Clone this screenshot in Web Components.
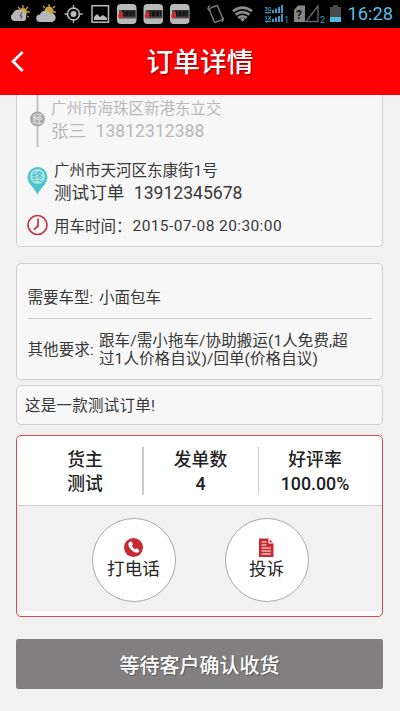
<!DOCTYPE html>
<html lang="zh-CN">
<head>
<meta charset="utf-8">
<title>订单详情</title>
<style>
html,body{margin:0;height:100%;overflow:hidden;background:#f1f1f1}
body{font-family:Roboto,"Noto Sans CJK SC",sans-serif;color:#383838}
</style>
</head>
<body>
<order-page></order-page>
<script>
const define = (name, html) => customElements.define(name, class extends HTMLElement {
  constructor() {
    super();
    const t = document.createElement('template');
    t.innerHTML = html;
    this.attachShadow({mode: 'open'}).append(t.content.cloneNode(true));
  }
});

const thumb = x => `<g transform="translate(${x} 4)"><rect width="19.500" height="20" rx="4" fill="#b9b9b9"/><rect x="2" y="6" width="17" height="8.500" fill="#55504f"/><rect x="5" y="6.500" width="13" height="6" fill="#171717"/><path d="M1 12l2-4h3v6H2z" fill="#c92a2a"/><path d="M8 7v5M12 7v5M16 7v5" stroke="#333"/></g>`;

define('status-bar', `
<style>
:host{display:flex;height:28px;background:#000}
svg{display:block;flex:none}
time{flex:1;font:18.300px/28px Roboto,sans-serif;color:#5fb9e4;text-align:right;padding-right:7px;white-space:nowrap}
</style>
<svg width="345" height="28" viewBox="0 0 345 28">
  <g stroke="#c6a33c" stroke-width="1.300"><path d="M23 5v3M18 7l2 2M28 7l-2 2M30 12h-3M29 17l-2-1"/></g>
  <circle cx="23" cy="12" r="4" fill="#c9a43b"/>
  <path d="M14 21a4 4 0 0 1-1-7.500a5.500 5.500 0 0 1 9-2.500a4.500 4.500 0 0 1 4 6a3 3 0 0 1-2 4z" fill="#b7b7b7"/>
  <path d="M22 12l-2 4h2l-1 3" fill="none" stroke="#555"/>
  <g stroke="#c6a33c" stroke-width="1.300"><path d="M49 4v3M43 6l2 2M55 6l-2 2M56 12h-3"/></g>
  <circle cx="49" cy="11" r="4.500" fill="#c9a43b"/>
  <path d="M40 22a3.700 3.700 0 0 1 0-7.500a5.500 5.500 0 0 1 10-1a4.300 4.300 0 0 1 2.500 8.500z" fill="#b7b7b7"/>
  <circle cx="73.500" cy="14" r="6" fill="none" stroke="#bbb" stroke-width="1.500"/><circle cx="73.500" cy="14" r="3" fill="#bbb"/>
  <path d="M73.500 5v4M73.500 19v4M64.500 14h4M78.500 14h4" stroke="#bbb" stroke-width="1.300"/>
  <rect x="92" y="5.700" width="16.500" height="16.500" fill="none" stroke="#bbb" stroke-width="1.500"/><path d="M94 20v-3l3-3 3 3 3-2 4 3v2z" fill="#bbb"/>
  ${thumb(117)}${thumb(143.500)}${thumb(170)}
  <g fill="none" stroke="#777" stroke-width="1.500"><rect x="211.500" y="6.500" width="9" height="15" rx="1" transform="rotate(-22 216 14)"/><path d="M209.500 5.500l-1.500 3 1 2M222.500 17l1 2-1.500 3"/></g>
  <g fill="none" stroke="#8c8c8c" stroke-width="2.700"><path d="M233 11.200q9.500-7.200 19 0"/><path d="M235.500 14.700q7-5.200 14 0"/><path d="M238.200 17.900q4.300-3.200 8.600 0"/></g><path d="M240 19q2.500-1.800 5 0l-2.500 3z" fill="#8c8c8c"/>
  <g fill="#3f9bc6"><path d="M272 10h2v3h-2zM275 8.500h2V13h-2zM278 7h2v6h-2zM281 5h2v8h-2zM272 19h2v3h-2zM275 17.500h2V22h-2zM278 16h2v6h-2zM281 14h2v8h-2zM265 12h6v1.300h-6zM265 20.700h6V22h-6z"/></g>
  <g fill="#3f9bc6" font-family="Roboto,sans-serif"><text x="264.500" y="10.500" font-size="5.500" font-weight="700">3G</text><text x="264.500" y="19.500" font-size="5.500" font-weight="700">1X</text><text x="284" y="23" font-size="9">1</text><text x="320" y="23" font-size="9">2</text></g>
  <path d="M294 10l4-4.500h7V22h-11z" fill="#858585"/><text x="296" y="19" font-family="Roboto,sans-serif" font-weight="700" font-size="12" fill="#111">?</text>
  <path d="M306 21.500L318 6v15.500z" fill="none" stroke="#686868" stroke-width="1.300"/>
  <path d="M330 7h3V5h5v2h3v15h-11z" fill="#494949"/><path d="M330 17h11v5h-11z" fill="#50b6e2"/>
</svg>
<time>16:28</time>`);

define('title-bar', `
<style>
:host{display:grid;grid-template-columns:40px 1fr 40px;height:67px;background:#fe0000;color:#fff;align-items:center}
svg{display:block}
h1{margin:0;font-size:26.800px;line-height:40px;font-weight:500;text-align:center;text-shadow:1px 1px 1px #7d0000;white-space:nowrap;padding-top:3px}
</style>
<svg width="40" height="67" viewBox="0 0 40 67" fill="none" stroke="#fff" stroke-width="2.800"><path d="M22.700 24L13 33.500l9.700 9.500"/></svg>
<h1><slot></slot></h1>`);

define('info-card', `
<style>
:host{display:block;box-sizing:border-box;border:1.500px solid #cfcfcf;border-radius:5px;background:#f7f7f7;margin:0 17px 0 16px}
</style><slot></slot>`);

define('route-stop', `
<style>
:host{display:grid;grid-template-columns:var(--icon-column) 1fr;white-space:nowrap}
.a{font-size:15.500px;line-height:22px}
.b{font-size:17.600px;line-height:22px}
</style>
<slot name="icon"></slot>
<div><div class="a"><slot name="address"></slot></div><div class="b"><slot name="contact"></slot></div></div>`);

define('label-row', `
<style>
:host{display:grid;grid-template-columns:71.500px 1fr;align-items:center;font-size:15.500px;line-height:18.500px;white-space:nowrap}
</style><span><slot name="label"></slot></span><div><slot></slot></div>`);

define('stat-cell', `
<style>
:host{display:block;flex:1;text-align:center;font-size:17.800px;line-height:24px;font-weight:500;color:#222;white-space:nowrap}
</style><div><slot name="name"></slot></div><div><slot></slot></div>`);

define('round-button', `
<style>
:host{display:flex;flex-direction:column;align-items:center;box-sizing:border-box;width:84px;height:84px;border:1.300px solid #aaa;border-radius:50%;background:#fff;padding-top:19px;font-size:17.600px;line-height:24px;color:#252525;white-space:nowrap}
::slotted(svg){display:block}
</style><slot name="icon"></slot><span><slot></slot></span>`);

define('wide-button', `
<style>
:host{display:flex;align-items:center;justify-content:center;box-sizing:border-box;height:50px;margin:22px 17px 0 16px;border-radius:2px;background:#827f80;color:#fff;font-size:20px;font-weight:500;text-shadow:1px 1px 1px #555;white-space:nowrap}
</style><slot></slot>`);

define('order-page', `
<style>
:host{display:flex;flex-direction:column;width:400px;height:711px;overflow:hidden;background:#f1f1f1}
svg{display:block}
.route{height:152px;border-top:0;border-radius:0 0 5px 5px}
.past{color:#b9b9b9;height:57px;padding-top:3px;box-sizing:border-box;--icon-column:34px}
.past svg{margin-top:-3px}
.end{padding-top:8px;--icon-column:37px}
.end svg{margin-top:4px;margin-bottom:-4px}
.contact{word-spacing:5px}
.when{display:flex;align-items:center;height:28px;margin-top:7px;padding-left:10px;font-size:15.500px;white-space:nowrap}
.when span{margin-left:6px}
.when time{letter-spacing:.4px;margin-left:1px;padding-top:1px}
.needs{height:117px;margin-top:16px;padding:0 10px 0 10.500px}
.needs label-row:first-child{height:55px;padding-top:15px;box-sizing:border-box;border-bottom:1.500px solid #ccc}
.needs label-row:last-child{height:62px}
.needs .wide{letter-spacing:.1px}
.note{height:40px;margin-top:5px;padding-left:8px;font-size:15.500px;line-height:40px;letter-spacing:.25px}
.client{height:182px;margin-top:10px;border-color:#cf4b50;background:#fff;overflow:hidden}
.stats{display:flex;height:69px;border-bottom:1.500px solid #ccc;align-items:center}
.stats i{width:1.500px;height:48px;background:#ccc}
.stats stat-cell{padding-top:2px}
.stats stat-cell:first-child{flex:0 0 125px;box-sizing:border-box;padding-left:11px}
.stats stat-cell:nth-child(3){flex:0 0 114px}
.stats stat-cell:last-child{padding-right:11px}
.actions{display:flex;box-sizing:border-box;height:105px;background:#f1f1f1;padding:2px 0 0 74.500px;gap:49px;align-items:center}
</style>
<status-bar></status-bar>
<title-bar>订单详情</title-bar>
<info-card class="route">
  <route-stop class="past">
    <svg slot="icon" width="34" height="54" viewBox="0 0 34 54"><path d="M20.500 0v52" stroke="#bbb" stroke-width="1.800"/><circle cx="20.500" cy="24" r="7.500" fill="#aaa"/><text x="20.500" y="27.700" text-anchor="middle" font-size="10" fill="#ececec">经</text></svg>
    <span slot="address">广州市海珠区新港东立交</span><span slot="contact" class="contact">张三 13812312388</span>
  </route-stop>
  <route-stop class="end">
    <svg slot="icon" width="37" height="44" viewBox="0 0 37 44"><path d="M20.500 31C18 24 10.500 20 10.500 13a10 10 0 0 1 20 0C30.500 20 23 24 20.500 31z" fill="#4dc3cf"/><circle cx="20.500" cy="12.500" r="7.500" fill="#a8e3e5"/><text x="20.500" y="16.700" text-anchor="middle" font-size="11.500" fill="#42b9c6">终</text></svg>
    <span slot="address">广州市天河区东康街1号</span><span slot="contact" class="contact">测试订单 13912345678</span>
  </route-stop>
  <div class="when"><svg width="21" height="22" viewBox="0 0 21 22" fill="none" stroke="#c2343f" stroke-width="1.700"><circle cx="10.500" cy="11" r="9.500"/><path d="M11 4.500v7.500l-4 3.500"/></svg><span>用车时间：</span><time>2015-07-08 20:30:00</time></div>
</info-card>
<info-card class="needs">
  <label-row><span slot="label">需要车型:</span>小面包车</label-row>
  <label-row class="wide"><span slot="label">其他要求:</span>跟车/需小拖车/协助搬运(1人免费,超<br>过1人价格自议)/回单(价格自议)</label-row>
</info-card>
<info-card class="note">这是一款测试订单!</info-card>
<info-card class="client">
  <div class="stats">
    <stat-cell><span slot="name">货主</span>测试</stat-cell><i></i>
    <stat-cell><span slot="name">发单数</span>4</stat-cell><i></i>
    <stat-cell><span slot="name">好评率</span>100.00%</stat-cell>
  </div>
  <div class="actions">
    <round-button><svg slot="icon" width="19" height="19" viewBox="0 0 19 19"><circle cx="9.500" cy="9.500" r="9.500" fill="#c52b30"/><path d="M5.500 4l1.700-.8 1.900 3-1.300 1.300q1 2.700 3.500 3.800l1.500-1.100 2.700 2.200-1 1.900q-2.500 1.400-6-1.300Q4.500 9.500 4.300 6.500 4.400 4.700 5.500 4z" fill="#fff"/></svg>打电话</round-button>
    <round-button><svg slot="icon" width="15" height="19" viewBox="0 0 15 19"><path d="M0 .5h9.500l5 4.500V19H0z" fill="#c52b30"/><path d="M10 1v4h4.200M2.500 4h5M2.500 7h5M2.500 10h9.300M2.500 13h9.300M2.500 16h9.300" fill="none" stroke="#fff" stroke-width="1.200"/></svg>投诉</round-button>
  </div>
</info-card>
<wide-button>等待客户确认收货</wide-button>`);
</script>
</body>
</html>
